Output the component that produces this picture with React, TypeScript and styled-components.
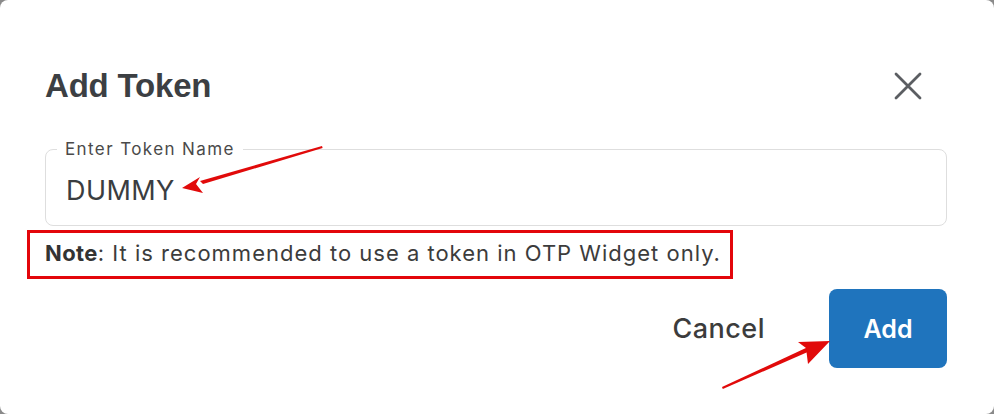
import React from "react";
import styled, { createGlobalStyle } from "styled-components";

const Global = createGlobalStyle`
  html, body { margin: 0; padding: 0; background: #8a8a8a; }
  body { font-family: Inter, "Noto Sans", sans-serif; }
  * { box-sizing: border-box; }
`;

const Dialog = styled.div`
  position: relative;
  width: 994px;
  height: 414px;
  background: #ffffff;
  border-radius: 8px;
  padding: 66px 47px 0 45px;
  display: flex;
  flex-direction: column;
`;

const Header = styled.div`
  display: flex;
  align-items: center;
  justify-content: space-between;
  height: 40px;
`;

const Title = styled.h2`
  margin: 0;
  font-family: "Liberation Sans", Arial, sans-serif;
  font-weight: 700;
  font-size: 33px;
  color: #3c3f43;
  letter-spacing: -0.2px;
`;

const CloseButton = styled.button`
  border: 0;
  background: transparent;
  padding: 0;
  width: 30px;
  height: 30px;
  margin-right: 24px;
  display: flex;
  align-items: center;
  justify-content: center;
  cursor: pointer;
`;

const Field = styled.div`
  position: relative;
  margin-top: 43px;
  height: 77px;
  border: 1.5px solid #dedede;
  border-radius: 8px;
  display: flex;
  align-items: center;
  padding: 0 20px;
`;

const FieldLabel = styled.label`
  position: absolute;
  left: 11px;
  top: -12px;
  padding: 0 8px;
  background: #ffffff;
  font-size: 17px;
  letter-spacing: 1.4px;
  line-height: 22px;
  color: #4a4a4a;
`;

const FieldInput = styled.div`
  font-size: 27px;
  color: #3a3d40;
  padding-top: 6px;
  letter-spacing: 0.4px;
`;

const NoteRow = styled.div`
  display: flex;
  margin-top: 4px;
  margin-left: -18px;
`;

const Note = styled.p`
  margin: 0;
  border: 3px solid #e3060b;
  padding: 7px 9px 9px 15px;
  font-size: 22px;
  letter-spacing: 1px;
  line-height: 27px;
  color: #3c3c3c;
  & strong { font-weight: 700; color: #333; letter-spacing: 0.4px; }
`;

const Actions = styled.div`
  display: flex;
  justify-content: flex-end;
  align-items: center;
  gap: 64px;
  margin-top: 10px;
`;

const TextButton = styled.button`
  border: 0;
  background: transparent;
  font-family: Inter, sans-serif;
  font-size: 27px;
  letter-spacing: 0.5px;
  font-weight: 500;
  color: #3c3c3c;
  padding: 0;
  cursor: pointer;
`;

const PrimaryButton = styled.button`
  border: 0;
  background: #1f74bd;
  color: #ffffff;
  width: 118px;
  height: 79px;
  border-radius: 8px;
  font-family: Inter, sans-serif;
  font-size: 25px;
  font-weight: 600;
  cursor: pointer;
`;

const Annotations = styled.svg`
  position: absolute;
  left: 0;
  top: 0;
  width: 994px;
  height: 414px;
  pointer-events: none;
`;

export default function App() {
  return (
    <>
      <Global />
      <Dialog>
        <Header>
          <Title>Add Token</Title>
          <CloseButton aria-label="Close">
            <svg width="28" height="28" viewBox="0 0 28 28">
              <path d="M2 2 L26 26 M26 2 L2 26" stroke="#5b5e62" strokeWidth="2.8" strokeLinecap="round" />
            </svg>
          </CloseButton>
        </Header>
        <Field>
          <FieldLabel>Enter Token Name</FieldLabel>
          <FieldInput>DUMMY</FieldInput>
        </Field>
        <NoteRow>
          <Note>
            <strong>Note</strong>: It is recommended to use a token in OTP Widget only.
          </Note>
        </NoteRow>
        <Actions>
          <TextButton>Cancel</TextButton>
          <PrimaryButton>Add</PrimaryButton>
        </Actions>
        <Annotations viewBox="0 0 994 414">
          <polygon points="322,146 322.6,148 203,184 200,181" fill="#e10a0a" />
          <polygon points="182,188 200,177 196,184 203,193" fill="#e10a0a" />
          <polygon points="722,387 722.8,389 810,351 808,347" fill="#e10a0a" />
          <polygon points="830,341 798,342 806,348 808,364" fill="#e10a0a" />
        </Annotations>
      </Dialog>
    </>
  );
}
